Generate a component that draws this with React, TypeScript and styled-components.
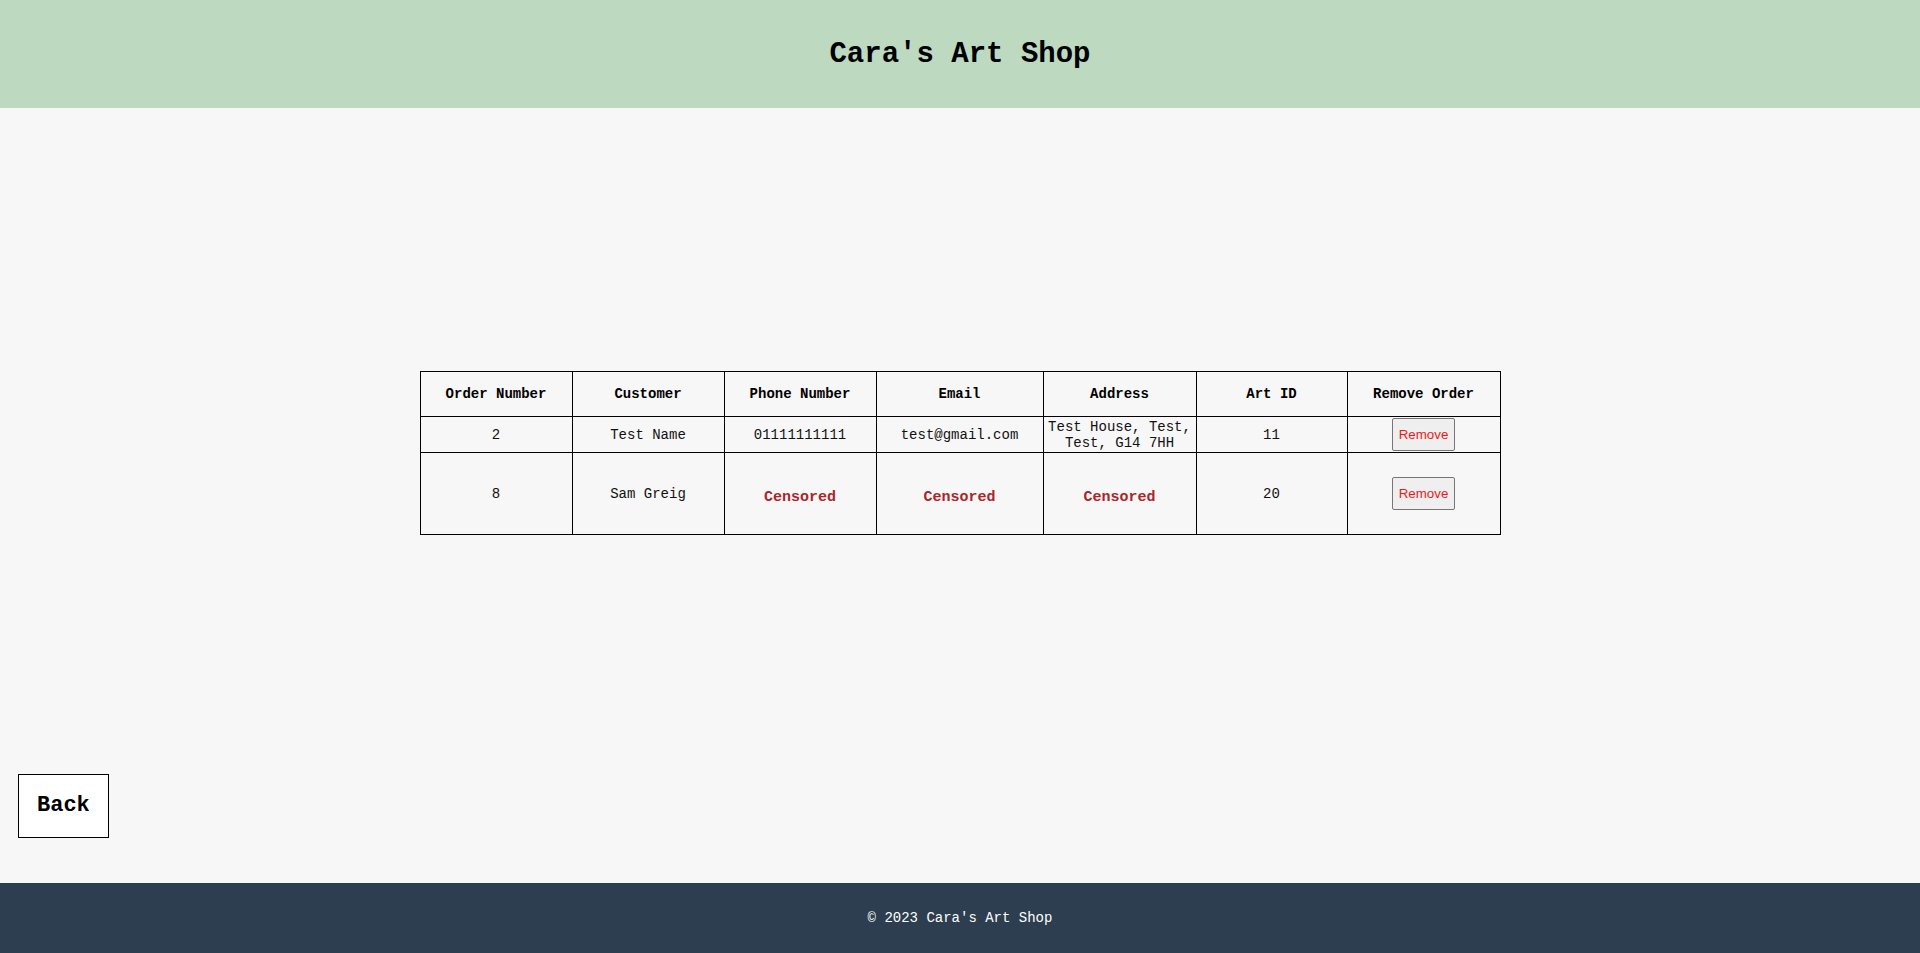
import React from 'react';
import styled, { createGlobalStyle } from 'styled-components';

const GlobalStyle = createGlobalStyle`
  html, body {
    margin: 0;
    padding: 0;
    background: #f7f7f7;
    font-family: "Courier New", "Liberation Mono", monospace;
  }
`;

const Page = styled.div`
  min-height: 100vh;
  display: flex;
  flex-direction: column;
`;

const Header = styled.header`
  height: 108px;
  background: #bddac0;
  display: flex;
  align-items: center;
  justify-content: center;
`;

const Title = styled.h1`
  margin: 0;
  font-size: 29px;
  font-weight: bold;
  color: #000;
`;

const Main = styled.main`
  flex: 1;
  display: flex;
  flex-direction: column;
`;

const TableWrap = styled.div`
  display: flex;
  justify-content: center;
  padding-top: 263px;
`;

const OrdersTable = styled.table`
  width: 1080px;
  table-layout: fixed;
  border-collapse: collapse;
  border: 1px solid #000;
  font-size: 14px;
`;

const HeadCell = styled.th`
  border: 1px solid #000;
  padding: 14px 1px;
  font-weight: bold;
  text-align: center;
  vertical-align: middle;
`;

const Cell = styled.td`
  border: 1px solid #000;
  padding: 1px;
  text-align: center;
  vertical-align: middle;
  color: #111;
  line-height: 16px;
`;

const Censored = styled.p`
  margin: 35px 0 27px;
  font-size: 15px;
  font-weight: bold;
  color: #a8262b;
  line-height: 17px;
`;

const RemoveButton = styled.button`
  font-family: Arial, "Liberation Sans", sans-serif;
  font-size: 13.33px;
  color: #f01818;
  background: #efefef;
  border: 1px solid #767676;
  border-radius: 2px;
  padding: 8px 6px;
  line-height: 15px;
  cursor: pointer;
`;

const Spacer = styled.div`
  flex: 1;
`;

const BackButton = styled.button`
  align-self: flex-start;
  margin: 0 0 45px 18px;
  padding: 17px 18px;
  background: #fff;
  border: 1px solid #000;
  font-family: "Courier New", "Liberation Mono", monospace;
  font-size: 22px;
  font-weight: bold;
  line-height: 28px;
  color: #000;
  cursor: pointer;
`;

const Footer = styled.footer`
  height: 70px;
  background: #2d3e50;
  color: #fff;
  display: flex;
  align-items: center;
  justify-content: center;
  font-size: 14px;
`;

const columns = [
  { label: 'Order Number', width: 152 },
  { label: 'Customer', width: 152 },
  { label: 'Phone Number', width: 152 },
  { label: 'Email', width: 167 },
  { label: 'Address', width: 153 },
  { label: 'Art ID', width: 151 },
  { label: 'Remove Order', width: 153 },
];

type Order = {
  id: number;
  customer: string;
  phone?: string;
  email?: string;
  address?: string;
  artId: number;
};

const orders: Order[] = [
  {
    id: 2,
    customer: 'Test Name',
    phone: '01111111111',
    email: 'test@gmail.com',
    address: 'Test House, Test, Test, G14 7HH',
    artId: 11,
  },
  { id: 8, customer: 'Sam Greig', artId: 20 },
];

function Private(props: { value?: string }) {
  return props.value ? <>{props.value}</> : <Censored>Censored</Censored>;
}

export default function App() {
  return (
    <Page>
      <GlobalStyle />
      <Header>
        <Title>Cara's Art Shop</Title>
      </Header>
      <Main>
        <TableWrap>
          <OrdersTable>
            <colgroup>
              {columns.map((c) => (
                <col key={c.label} style={{ width: c.width }} />
              ))}
            </colgroup>
            <thead>
              <tr>
                {columns.map((c) => (
                  <HeadCell key={c.label}>{c.label}</HeadCell>
                ))}
              </tr>
            </thead>
            <tbody>
              {orders.map((o) => (
                <tr key={o.id}>
                  <Cell>{o.id}</Cell>
                  <Cell>{o.customer}</Cell>
                  <Cell>
                    <Private value={o.phone} />
                  </Cell>
                  <Cell>
                    <Private value={o.email} />
                  </Cell>
                  <Cell>
                    <Private value={o.address} />
                  </Cell>
                  <Cell>{o.artId}</Cell>
                  <Cell>
                    <RemoveButton>Remove</RemoveButton>
                  </Cell>
                </tr>
              ))}
            </tbody>
          </OrdersTable>
        </TableWrap>
        <Spacer />
        <BackButton>Back</BackButton>
      </Main>
      <Footer>© 2023 Cara's Art Shop</Footer>
    </Page>
  );
}
